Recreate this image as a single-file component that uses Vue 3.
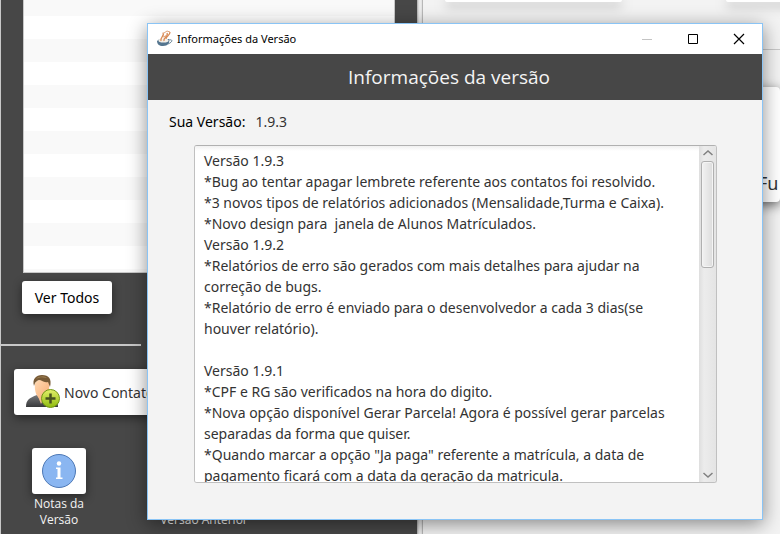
<script setup>
import { ref } from 'vue'

const rows = Array.from({ length: 13 }, (_, i) => i)
const version = '1.9.3'
const notes = ref(`Versão 1.9.3
*Bug ao tentar apagar lembrete referente aos contatos foi resolvido.
*3 novos tipos de relatórios adicionados (Mensalidade,Turma e Caixa).
*Novo design para  janela de Alunos Matrículados.
Versão 1.9.2
*Relatórios de erro são gerados com mais detalhes para ajudar na correção de bugs.
*Relatório de erro é enviado para o desenvolvedor a cada 3 dias(se houver relatório).

Versão 1.9.1
*CPF e RG são verificados na hora do digito.
*Nova opção disponível Gerar Parcela! Agora é possível gerar parcelas separadas da forma que quiser.
*Quando marcar a opção "Ja paga" referente a matrícula, a data de pagamento ficará com a data da geração da matricula.`)
</script>

<template>
  <div class="desktop">
    <aside class="sidebar">
      <ul class="list">
        <li v-for="r in rows" :key="r"></li>
      </ul>
      <button class="btn all" type="button">Ver Todos</button>
      <hr class="rule" />
      <button class="btn contact" type="button">
        <svg width="36" height="36" viewBox="0 0 36 36" aria-hidden="true">
          <defs>
            <linearGradient id="suit" x1="0" y1="0" x2="0" y2="1">
              <stop offset="0" stop-color="#77787b" />
              <stop offset="1" stop-color="#38393b" />
            </linearGradient>
            <linearGradient id="face" x1="0" y1="0" x2="1" y2="1">
              <stop offset="0" stop-color="#ffd9b3" />
              <stop offset="1" stop-color="#f8ad75" />
            </linearGradient>
            <linearGradient id="plus" x1="0" y1="0" x2="0" y2="1">
              <stop offset="0" stop-color="#e2f06a" />
              <stop offset="1" stop-color="#8fbb0e" />
            </linearGradient>
          </defs>
          <path d="M1 33c0-7 3-9 11-12h9c8 3 12 5 12 12z" fill="url(#suit)" />
          <path d="M12 20l4 10 5-10z" fill="#f6bd8c" />
          <path d="M10 10c0-5 14-6 14 0 1 7-2 15-7 15s-8-8-7-15z" fill="url(#face)" />
          <path d="M9 12C7 5 11 1 17 1c7 0 10 4 8 12l-2-5c-3 1-5-1-8-2-3 0-4 2-5 3z" fill="#775a36" />
          <path d="M11 5c3-3 8-3 11-1-4-1-8-1-11 1z" fill="#a88a5a" />
          <circle cx="25.500" cy="24.500" r="9" fill="url(#plus)" stroke="#729715" />
          <path d="M25.500 19.500v10M20.500 24.500h10" stroke="#48521f" stroke-width="2.500" />
        </svg>
        <span>Novo Contato</span>
      </button>
      <div class="shortcuts">
        <div class="shortcut">
          <button class="btn tile" type="button" aria-labelledby="notes-label">
            <svg width="36" height="36" viewBox="0 0 36 36" aria-hidden="true">
              <circle cx="18" cy="18" r="16.500" fill="#8ab6f1" stroke="#4d78b5" />
              <circle cx="18" cy="10.500" r="2.200" fill="#fff" />
              <path d="M15 14.500h4.500v10H21.500v1.500h-6.500v-1.500h1.500v-8.500H15z" fill="#fff" />
            </svg>
          </button>
          <span id="notes-label">Notas da Versão</span>
        </div>
        <div class="shortcut previous">
          <button class="btn tile" type="button" aria-labelledby="previous-label"></button>
          <span id="previous-label">Versão Anterior</span>
        </div>
      </div>
    </aside>

    <div class="splitter"></div>

    <main class="content">
      <div class="top-cards">
        <div class="card"></div>
        <div class="card"></div>
      </div>
      <hr />
      <div class="card staff">Fu</div>
    </main>

    <section class="dialog" role="dialog" aria-labelledby="dialog-title">
      <header class="titlebar">
        <svg width="18" height="18" viewBox="0 0 18 18" aria-hidden="true">
          <path d="M1 11c2-2 4-2 6-2h6c1 4-1 7-6 7-4 0-6-2-6-5z" fill="#54758f" />
          <ellipse cx="7.500" cy="10.500" rx="5" ry="2" fill="#f4efe8" />
          <path d="M13 10c4-1 4 2-1 4" fill="none" stroke="#6d8798" />
          <path d="M5 11C4 7 9 6 7 2.500M8 11c-1-4 5-5 3-8M10 9c0-3 4-3 4-7" fill="none" stroke="#d98a55" stroke-width="1.300" />
          <path d="M8 3l3-2 3 1M7 7l5-2" fill="none" stroke="#dfa27a" />
        </svg>
        <span id="dialog-title">Informações da Versão</span>
        <div class="controls">
          <button type="button" aria-label="Minimizar" disabled>
            <svg width="12" height="12" viewBox="0 0 12 12"><path d="M1 6.500h10" stroke="#c4c4c4" /></svg>
          </button>
          <button type="button" aria-label="Maximizar">
            <svg width="12" height="12" viewBox="0 0 12 12"><path d="M1.500 1.500h9v9h-9z" fill="none" stroke="#000" /></svg>
          </button>
          <button type="button" aria-label="Fechar">
            <svg width="12" height="12" viewBox="0 0 12 12"><path d="M1 1l10 10M11 1L1 11" stroke="#000" stroke-width="1.200" /></svg>
          </button>
        </div>
      </header>
      <h1>Informações da versão</h1>
      <div class="body">
        <div class="version">
          <label for="notes">Sua Versão:</label>
          <output>{{ version }}</output>
        </div>
        <div class="notes">
          <textarea id="notes" v-model="notes" readonly spellcheck="false"></textarea>
          <div class="scroll">
            <svg width="12" height="8" viewBox="0 0 12 8"><path d="M1.500 6L6 2l4.500 4" fill="none" stroke="#808080" stroke-width="1.500" /></svg>
            <div class="track"><div class="thumb"></div></div>
            <svg width="12" height="8" viewBox="0 0 12 8"><path d="M1.500 2L6 6l4.500-4" fill="none" stroke="#808080" stroke-width="1.500" /></svg>
          </div>
        </div>
      </div>
    </section>
  </div>
</template>

<style>
body {
  margin: 0;
  overflow: hidden;
}
</style>

<style scoped>
* {
  box-sizing: border-box;
}
.desktop {
  position: relative;
  display: flex;
  height: 100vh;
  overflow: hidden;
  font-family: "Noto Sans", "Open Sans", sans-serif;
  font-size: 14px;
  color: #333;
}
.sidebar {
  flex: 0 0 417px;
  display: flex;
  flex-direction: column;
  align-items: flex-start;
  background: #474747;
  border-left: 1px solid #c8c8c8;
}
.splitter {
  flex: 0 0 6px;
  background: linear-gradient(90deg, #d0d0d0, #f0f0f0 50%, #e0e0e0);
  border: solid #b8b8b8;
  border-width: 0 1px;
}
.list {
  flex: none;
  align-self: stretch;
  height: 273px;
  margin: 0 22px;
  padding: 0;
  list-style: none;
  overflow: hidden;
  background: #fff;
  border: 1px solid #c8c8c8;
  border-top: 0;
}
.list li {
  height: 23px;
}
.list li:first-child {
  height: 16px;
}
.list li:nth-child(odd) {
  background: #f9f9f9;
}
.btn {
  border: 0;
  border-radius: 3px;
  background: #fff;
  font: inherit;
  color: #333;
  box-shadow: 0 3px 10px rgba(0, 0, 0, 0.45);
}
.all {
  height: 33px;
  margin: 8px 21px 0;
  padding: 0 12px;
  min-width: 90px;
  color: #000;
}
.rule {
  width: 140px;
  height: 2px;
  margin: 30px 0 0;
  border: 0;
  background: #c8c8c8;
}
.contact {
  display: flex;
  align-items: center;
  gap: 3px;
  width: 182px;
  height: 46px;
  margin: 23px 13px 0;
  padding: 0 11px;
  white-space: nowrap;
}
.shortcuts {
  display: flex;
  gap: 60px;
  margin: 33px 0 0 22px;
  font-family: "Open Sans", "Noto Sans", sans-serif;
  font-size: 12px;
  line-height: 16px;
  color: #f4f4f4;
}
.shortcut {
  display: flex;
  flex-direction: column;
  align-items: center;
  gap: 2px;
  width: 72px;
  text-align: center;
}
.previous {
  width: 98px;
  gap: 18px;
  white-space: nowrap;
}
.tile {
  flex: none;
  display: grid;
  place-items: center;
  width: 54px;
  height: 46px;
  padding: 0;
}
.content {
  flex: 1;
  min-width: 0;
  background: #f3f3f3;
}
.content hr {
  height: 1px;
  margin: 47px 0 0;
  border: 0;
  background: #c8c8c8;
}
.top-cards {
  display: flex;
  gap: 104px;
  height: 2px;
  padding-left: 22px;
}
.card {
  flex: 0 0 177px;
  background: #fff;
  border-radius: 0 0 4px 4px;
  box-shadow: 0 3px 12px rgba(0, 0, 0, 0.6);
}
.staff {
  height: 115px;
  margin: 37px 0 0 200px;
  padding: 82px 0 0 135px;
  border-radius: 4px;
  font-size: 18px;
  line-height: 28px;
}
.dialog {
  position: absolute;
  top: 23px;
  left: 147px;
  right: 17px;
  bottom: 14px;
  display: flex;
  flex-direction: column;
  background: #f3f3f3;
  border: 1px solid #8ac4f5;
  box-shadow: 0 4px 18px rgba(0, 0, 0, 0.45);
}
.titlebar {
  flex: none;
  display: flex;
  align-items: center;
  gap: 3px;
  height: 30px;
  padding-left: 8px;
  background: #fff;
  color: #000;
  font-size: 11px;
  line-height: 14px;
}
.controls {
  display: flex;
  margin-left: auto;
}
.controls button {
  display: grid;
  place-items: center;
  width: 46px;
  height: 30px;
  padding: 0;
  border: 0;
  background: none;
}
h1 {
  flex: none;
  margin: 0;
  background: #474747;
  color: #f4f4f4;
  font-family: "Open Sans", "Noto Sans", sans-serif;
  font-size: 19px;
  font-weight: 400;
  line-height: 46px;
  text-align: center;
  padding-right: 12px;
}
.body {
  flex: 1;
  min-height: 0;
  display: flex;
  flex-direction: column;
  gap: 13px;
  padding: 12px 45px 36px 21px;
}
.version {
  display: flex;
  gap: 10px;
  line-height: 20px;
}
.version label {
  color: #000;
}
.notes {
  flex: 1;
  min-height: 0;
  display: flex;
  margin-left: 25px;
  border: 1px solid #c0c0c0;
  border-top-color: #b0b0b0;
  border-radius: 3px;
  background: #fff;
  overflow: hidden;
}
textarea {
  flex: 1;
  min-width: 0;
  margin: 0;
  padding: 4px 9px 0;
  border: 0;
  outline: 0;
  resize: none;
  overflow: hidden;
  background: linear-gradient(#f0f0f0, #fff 5px);
  color: #333;
  font: inherit;
  line-height: 21px;
}
.scroll {
  flex: none;
  display: flex;
  flex-direction: column;
  align-items: center;
  gap: 4px;
  width: 17px;
  padding: 3px 0;
  background: linear-gradient(90deg, #dedede, #ececec 30%, #e4e4e4);
}
.scroll svg {
  flex: none;
}
.track {
  flex: 1;
  width: 13px;
}
.thumb {
  height: 35%;
  border: 1px solid #b0b0b0;
  border-radius: 3px;
  background: linear-gradient(90deg, #f2f2f2, #dcdcdc);
  box-shadow: inset 0 0 0 1px #f4f4f4;
}
</style>
